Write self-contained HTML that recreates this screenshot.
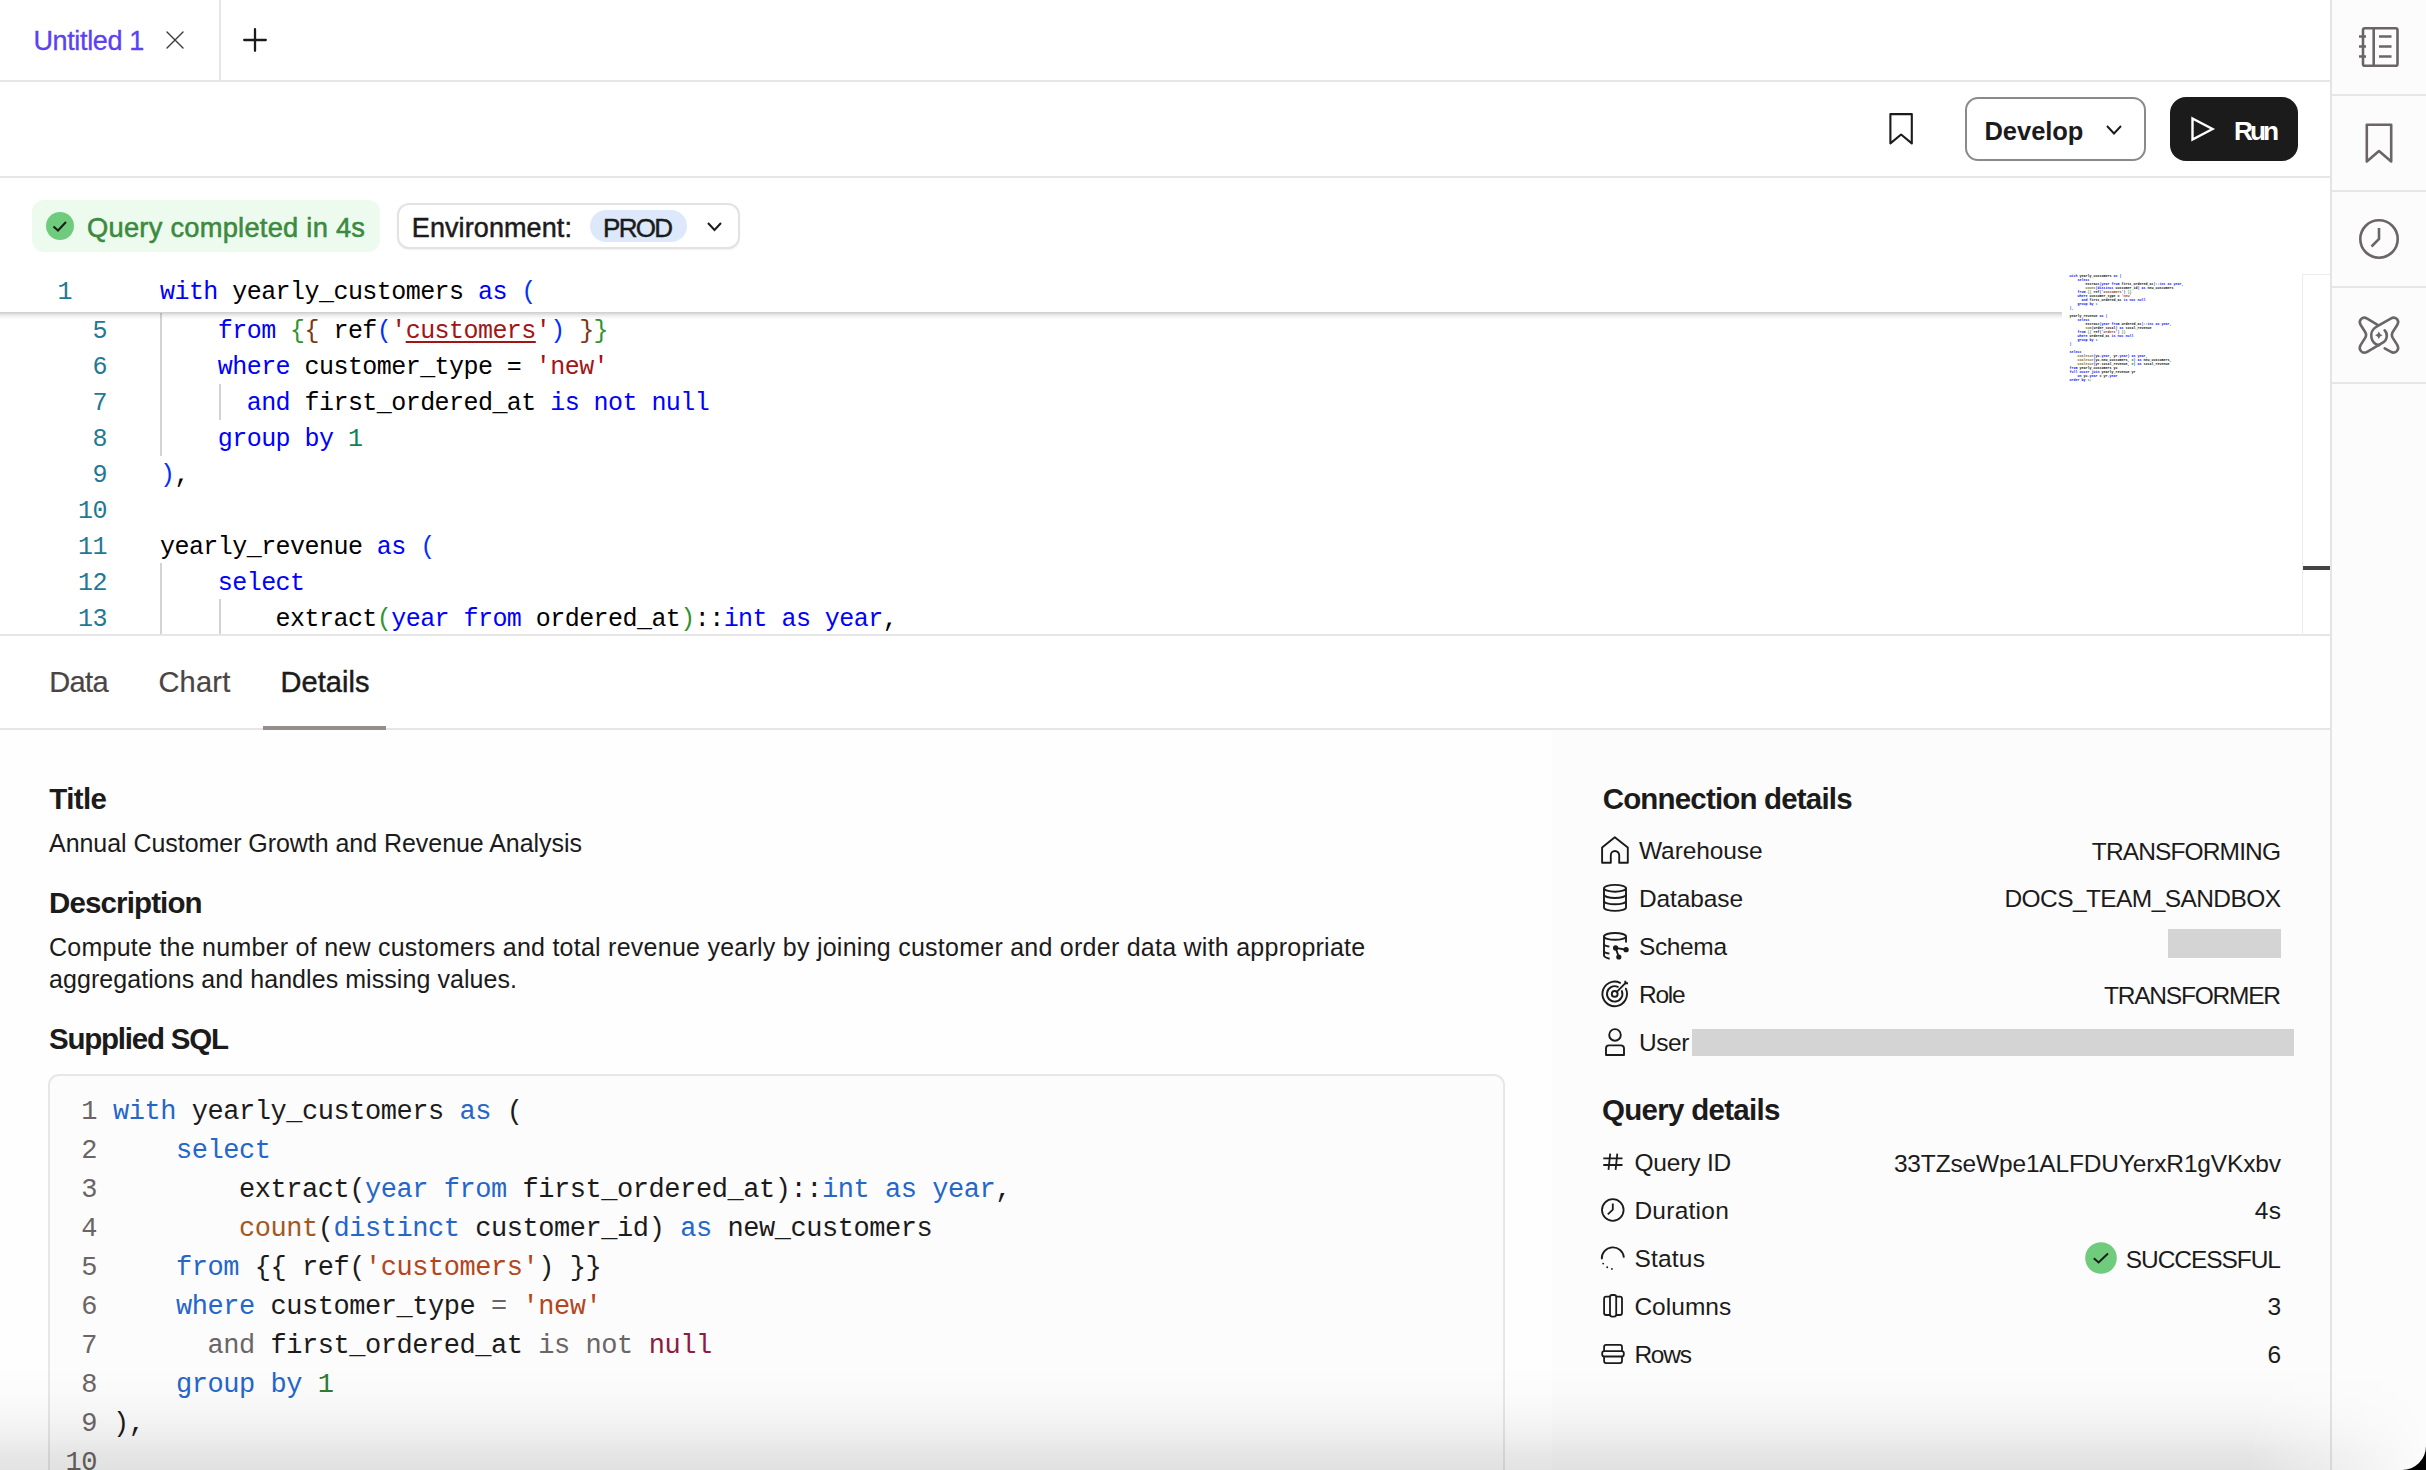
<!DOCTYPE html>
<html><head><meta charset="utf-8"><style>
html,body{margin:0;padding:0}
body{width:2426px;height:1470px;position:relative;overflow:hidden;background:#fff;font-family:'Liberation Sans', sans-serif}
.t{position:absolute;white-space:pre;font-family:'Liberation Sans', sans-serif}
.m{position:absolute;white-space:pre;font-family:'Liberation Mono', monospace}
svg{display:block}
</style></head><body>
<div style="position:absolute;left:0px;top:0px;width:2331px;height:80px;background:#fff"></div>
<div style="position:absolute;left:0px;top:80px;width:2331px;height:2px;background:#e7e5e5"></div>
<div style="position:absolute;left:219px;top:0px;width:2px;height:80px;background:#e7e5e5"></div>
<div class="t" style="left:33.40px;top:28.44px;font-size:27px;line-height:27px;color:#5b41f2;font-weight:400;letter-spacing:-0.347px;-webkit-text-stroke:0.3px #5b41f2;">Untitled 1</div>
<svg style="position:absolute;left:166px;top:31px;overflow:visible" width="18" height="18" viewBox="0 0 18 18"><path d="M1 1L17 17M17 1L1 17" stroke="#3d3a3a" stroke-width="1.4" fill="none" stroke-linecap="round"/></svg>
<svg style="position:absolute;left:243px;top:28px;overflow:visible" width="24" height="24" viewBox="0 0 24 24"><path d="M12 1.2V22.8M1.2 12H22.8" stroke="#1c1b1b" stroke-width="2.3" fill="none" stroke-linecap="round"/></svg>
<div style="position:absolute;left:0px;top:176px;width:2331px;height:2px;background:#e7e5e5"></div>
<svg style="position:absolute;left:1880px;top:105px;overflow:visible" width="45" height="50" viewBox="1880 105 45 50"><path d="M1890.4 114.1H1911.8V143.4L1901.1 134.5L1890.4 143.4Z" stroke="#1c1b1b" stroke-width="2.1" fill="none" stroke-linejoin="round"/></svg>
<div style="position:absolute;left:1965px;top:97px;width:181px;height:64px;box-sizing:border-box;border:2px solid #8e8988;border-radius:13px;background:#fff"></div>
<div class="t" style="left:1984.50px;top:118.71px;font-size:25.5px;line-height:25.5px;color:#1c1b1b;font-weight:700;letter-spacing:-0.042px;">Develop</div>
<svg style="position:absolute;left:2106px;top:125px;overflow:visible" width="16" height="10" viewBox="0 0 16 10"><path d="M1 1L8 8.5L15 1" stroke="#1c1b1b" stroke-width="1.9" fill="none"/></svg>
<div style="position:absolute;left:2170px;top:97px;width:128px;height:64px;background:#1c1b1b;border-radius:16px"></div>
<svg style="position:absolute;left:2191px;top:117px;overflow:visible" width="24" height="24" viewBox="0 0 24 24"><path d="M1.5 1.5L21.5 12L1.5 22.5Z" stroke="#fff" stroke-width="2.4" fill="none" stroke-linejoin="miter"/></svg>
<div class="t" style="left:2234.00px;top:118.04px;font-size:26.3px;line-height:26.3px;color:#fff;font-weight:700;letter-spacing:-3.062px;">Run</div>
<div style="position:absolute;left:32px;top:200px;width:348px;height:52px;background:#edfbee;border-radius:12px"></div>
<svg style="position:absolute;left:46px;top:212px;overflow:visible" width="28" height="28" viewBox="0 0 28 28"><circle cx="14" cy="14" r="14" fill="#6fcc7d"/><path d="M7.5 14.5L12 18.5L20 10" stroke="#1c1b1b" stroke-width="2" fill="none"/></svg>
<div class="t" style="left:87.00px;top:214.19px;font-size:27.3px;line-height:27.3px;color:#3b8a3f;font-weight:400;letter-spacing:0.244px;-webkit-text-stroke:0.55px #3b8a3f;">Query completed in 4s</div>
<div style="position:absolute;left:397px;top:203px;width:343px;height:46px;box-sizing:border-box;border:2px solid #e4e2e2;border-radius:12px;background:#fff;box-shadow:0 1px 2px rgba(0,0,0,0.06)"></div>
<div class="t" style="left:411.80px;top:214.64px;font-size:27px;line-height:27px;color:#1c1b1b;font-weight:400;letter-spacing:0.098px;-webkit-text-stroke:0.5px #1c1b1b;">Environment:</div>
<div style="position:absolute;left:590px;top:210px;width:97px;height:32px;background:#dde9fb;border-radius:16px"></div>
<div class="t" style="left:603.00px;top:215.29px;font-size:26px;line-height:26px;color:#1c1b1b;font-weight:400;letter-spacing:-1.708px;-webkit-text-stroke:0.45px #1c1b1b;">PROD</div>
<svg style="position:absolute;left:707px;top:222px;overflow:visible" width="15" height="10" viewBox="0 0 15 10"><path d="M1 1L7.5 8L14 1" stroke="#1c1b1b" stroke-width="2" fill="none"/></svg>
<div style="position:absolute;left:160px;top:313px;width:2px;height:143px;background:#d3d3d3"></div>
<div style="position:absolute;left:219px;top:384px;width:2px;height:36px;background:#d3d3d3"></div>
<div style="position:absolute;left:160px;top:563px;width:2px;height:72px;background:#d3d3d3"></div>
<div style="position:absolute;left:219px;top:599px;width:2px;height:36px;background:#d3d3d3"></div>
<div class="m" style="right:2319px;top:313.65px;font-size:25px;line-height:36px;letter-spacing:-0.550px;color:#237893;text-align:right">5</div>
<div class="m" style="left:160px;top:313.65px;font-size:25px;line-height:36px;letter-spacing:-0.550px"><span style="color:#0000ff">    from </span><span style="color:#319331">{</span><span style="color:#7b3814">{</span><span style="color:#000000"> ref</span><span style="color:#0431fa">(</span><span style="color:#a31515">&#x27;</span><span style="color:#a31515;text-decoration:underline;text-underline-offset:3px;text-decoration-thickness:2px">customers</span><span style="color:#a31515">&#x27;</span><span style="color:#0431fa">)</span><span style="color:#000000"> </span><span style="color:#7b3814">}</span><span style="color:#319331">}</span></div>
<div class="m" style="right:2319px;top:349.65px;font-size:25px;line-height:36px;letter-spacing:-0.550px;color:#237893;text-align:right">6</div>
<div class="m" style="left:160px;top:349.65px;font-size:25px;line-height:36px;letter-spacing:-0.550px"><span style="color:#0000ff">    where</span><span style="color:#000000"> customer_type = </span><span style="color:#a31515">&#x27;new&#x27;</span></div>
<div class="m" style="right:2319px;top:385.65px;font-size:25px;line-height:36px;letter-spacing:-0.550px;color:#237893;text-align:right">7</div>
<div class="m" style="left:160px;top:385.65px;font-size:25px;line-height:36px;letter-spacing:-0.550px"><span style="color:#0000ff">      and</span><span style="color:#000000"> first_ordered_at </span><span style="color:#0000ff">is not null</span></div>
<div class="m" style="right:2319px;top:421.65px;font-size:25px;line-height:36px;letter-spacing:-0.550px;color:#237893;text-align:right">8</div>
<div class="m" style="left:160px;top:421.65px;font-size:25px;line-height:36px;letter-spacing:-0.550px"><span style="color:#0000ff">    group by </span><span style="color:#098658">1</span></div>
<div class="m" style="right:2319px;top:457.65px;font-size:25px;line-height:36px;letter-spacing:-0.550px;color:#237893;text-align:right">9</div>
<div class="m" style="left:160px;top:457.65px;font-size:25px;line-height:36px;letter-spacing:-0.550px"><span style="color:#0431fa">)</span><span style="color:#000000">,</span></div>
<div class="m" style="right:2319px;top:493.65px;font-size:25px;line-height:36px;letter-spacing:-0.550px;color:#237893;text-align:right">10</div>
<div class="m" style="right:2319px;top:529.65px;font-size:25px;line-height:36px;letter-spacing:-0.550px;color:#237893;text-align:right">11</div>
<div class="m" style="left:160px;top:529.65px;font-size:25px;line-height:36px;letter-spacing:-0.550px"><span style="color:#000000">yearly_revenue </span><span style="color:#0000ff">as </span><span style="color:#0431fa">(</span></div>
<div class="m" style="right:2319px;top:565.65px;font-size:25px;line-height:36px;letter-spacing:-0.550px;color:#237893;text-align:right">12</div>
<div class="m" style="left:160px;top:565.65px;font-size:25px;line-height:36px;letter-spacing:-0.550px"><span style="color:#0000ff">    select</span></div>
<div class="m" style="right:2319px;top:601.65px;font-size:25px;line-height:36px;letter-spacing:-0.550px;color:#237893;text-align:right">13</div>
<div class="m" style="left:160px;top:601.65px;font-size:25px;line-height:36px;letter-spacing:-0.550px"><span style="color:#000000">        extract</span><span style="color:#319331">(</span><span style="color:#0000ff">year from </span><span style="color:#000000">ordered_at</span><span style="color:#319331">)</span><span style="color:#000000">::</span><span style="color:#0000ff">int as year</span><span style="color:#000000">,</span></div>
<div style="position:absolute;left:0px;top:274px;width:2062px;height:38px;background:#fff"></div>
<div style="position:absolute;left:0px;top:312px;width:2062px;height:7px;background:linear-gradient(to bottom, rgba(0,0,0,0.2), rgba(0,0,0,0.07) 50%, rgba(0,0,0,0))"></div>
<div class="m" style="right:2354px;top:275.35px;font-size:25px;line-height:36px;letter-spacing:-0.550px;color:#237893;text-align:right">1</div>
<div class="m" style="left:160px;top:275.35px;font-size:25px;line-height:36px;letter-spacing:-0.550px"><span style="color:#0000ff">with</span><span style="color:#000000"> yearly_customers </span><span style="color:#0000ff">as </span><span style="color:#0431fa">(</span></div>
<div class="m" style="left:2069.5px;top:274px;font-size:3.34px;line-height:4px;font-weight:700;"><div style="height:4px"><span style="color:#0000ff">with</span><span style="color:#000000"> </span><span style="color:#000000">yearly_customers</span><span style="color:#000000"> </span><span style="color:#0000ff">as</span><span style="color:#000000"> </span><span style="color:#0431fa">(</span></div><div style="height:4px"><span style="color:#000000">    </span><span style="color:#0000ff">select</span></div><div style="height:4px"><span style="color:#000000">        </span><span style="color:#000000">extract</span><span style="color:#0431fa">(</span><span style="color:#0000ff">year</span><span style="color:#000000"> </span><span style="color:#0000ff">from</span><span style="color:#000000"> </span><span style="color:#000000">first_ordered_at</span><span style="color:#0431fa">)</span><span style="color:#000000">::</span><span style="color:#0000ff">int</span><span style="color:#000000"> </span><span style="color:#0000ff">as</span><span style="color:#000000"> </span><span style="color:#0000ff">year</span><span style="color:#000000">,</span></div><div style="height:4px"><span style="color:#000000">        </span><span style="color:#795e26">count</span><span style="color:#0431fa">(</span><span style="color:#0000ff">distinct</span><span style="color:#000000"> </span><span style="color:#000000">customer_id</span><span style="color:#0431fa">)</span><span style="color:#000000"> </span><span style="color:#0000ff">as</span><span style="color:#000000"> </span><span style="color:#000000">new_customers</span></div><div style="height:4px"><span style="color:#000000">    </span><span style="color:#0000ff">from</span><span style="color:#000000"> </span><span style="color:#319331">{</span><span style="color:#319331">{</span><span style="color:#000000"> </span><span style="color:#000000">ref</span><span style="color:#0431fa">(</span><span style="color:#a31515">&#x27;customers&#x27;</span><span style="color:#0431fa">)</span><span style="color:#000000"> </span><span style="color:#319331">}</span><span style="color:#319331">}</span></div><div style="height:4px"><span style="color:#000000">    </span><span style="color:#0000ff">where</span><span style="color:#000000"> </span><span style="color:#000000">customer_type</span><span style="color:#000000"> = </span><span style="color:#a31515">&#x27;new&#x27;</span></div><div style="height:4px"><span style="color:#000000">      </span><span style="color:#0000ff">and</span><span style="color:#000000"> </span><span style="color:#000000">first_ordered_at</span><span style="color:#000000"> </span><span style="color:#0000ff">is</span><span style="color:#000000"> </span><span style="color:#0000ff">not</span><span style="color:#000000"> </span><span style="color:#0000ff">null</span></div><div style="height:4px"><span style="color:#000000">    </span><span style="color:#0000ff">group</span><span style="color:#000000"> </span><span style="color:#0000ff">by</span><span style="color:#000000"> </span><span style="color:#098658">1</span></div><div style="height:4px"><span style="color:#0431fa">)</span><span style="color:#000000">,</span></div><div style="height:4px">&nbsp;</div><div style="height:4px"><span style="color:#000000">yearly_revenue</span><span style="color:#000000"> </span><span style="color:#0000ff">as</span><span style="color:#000000"> </span><span style="color:#0431fa">(</span></div><div style="height:4px"><span style="color:#000000">    </span><span style="color:#0000ff">select</span></div><div style="height:4px"><span style="color:#000000">        </span><span style="color:#000000">extract</span><span style="color:#0431fa">(</span><span style="color:#0000ff">year</span><span style="color:#000000"> </span><span style="color:#0000ff">from</span><span style="color:#000000"> </span><span style="color:#000000">ordered_at</span><span style="color:#0431fa">)</span><span style="color:#000000">::</span><span style="color:#0000ff">int</span><span style="color:#000000"> </span><span style="color:#0000ff">as</span><span style="color:#000000"> </span><span style="color:#0000ff">year</span><span style="color:#000000">,</span></div><div style="height:4px"><span style="color:#000000">        </span><span style="color:#795e26">sum</span><span style="color:#0431fa">(</span><span style="color:#000000">order_total</span><span style="color:#0431fa">)</span><span style="color:#000000"> </span><span style="color:#0000ff">as</span><span style="color:#000000"> </span><span style="color:#000000">total_revenue</span></div><div style="height:4px"><span style="color:#000000">    </span><span style="color:#0000ff">from</span><span style="color:#000000"> </span><span style="color:#319331">{</span><span style="color:#319331">{</span><span style="color:#000000"> </span><span style="color:#000000">ref</span><span style="color:#0431fa">(</span><span style="color:#a31515">&#x27;orders&#x27;</span><span style="color:#0431fa">)</span><span style="color:#000000"> </span><span style="color:#319331">}</span><span style="color:#319331">}</span></div><div style="height:4px"><span style="color:#000000">    </span><span style="color:#0000ff">where</span><span style="color:#000000"> </span><span style="color:#000000">ordered_at</span><span style="color:#000000"> </span><span style="color:#0000ff">is</span><span style="color:#000000"> </span><span style="color:#0000ff">not</span><span style="color:#000000"> </span><span style="color:#0000ff">null</span></div><div style="height:4px"><span style="color:#000000">    </span><span style="color:#0000ff">group</span><span style="color:#000000"> </span><span style="color:#0000ff">by</span><span style="color:#000000"> </span><span style="color:#098658">1</span></div><div style="height:4px"><span style="color:#0431fa">)</span></div><div style="height:4px">&nbsp;</div><div style="height:4px"><span style="color:#0000ff">select</span></div><div style="height:4px"><span style="color:#000000">    </span><span style="color:#795e26">coalesce</span><span style="color:#0431fa">(</span><span style="color:#000000">yc</span><span style="color:#000000">.</span><span style="color:#0000ff">year</span><span style="color:#000000">, </span><span style="color:#000000">yr</span><span style="color:#000000">.</span><span style="color:#0000ff">year</span><span style="color:#0431fa">)</span><span style="color:#000000"> </span><span style="color:#0000ff">as</span><span style="color:#000000"> </span><span style="color:#0000ff">year</span><span style="color:#000000">,</span></div><div style="height:4px"><span style="color:#000000">    </span><span style="color:#795e26">coalesce</span><span style="color:#0431fa">(</span><span style="color:#000000">yc</span><span style="color:#000000">.</span><span style="color:#000000">new_customers</span><span style="color:#000000">, </span><span style="color:#098658">0</span><span style="color:#0431fa">)</span><span style="color:#000000"> </span><span style="color:#0000ff">as</span><span style="color:#000000"> </span><span style="color:#000000">new_customers</span><span style="color:#000000">,</span></div><div style="height:4px"><span style="color:#000000">    </span><span style="color:#795e26">coalesce</span><span style="color:#0431fa">(</span><span style="color:#000000">yr</span><span style="color:#000000">.</span><span style="color:#000000">total_revenue</span><span style="color:#000000">, </span><span style="color:#098658">0</span><span style="color:#0431fa">)</span><span style="color:#000000"> </span><span style="color:#0000ff">as</span><span style="color:#000000"> </span><span style="color:#000000">total_revenue</span></div><div style="height:4px"><span style="color:#0000ff">from</span><span style="color:#000000"> </span><span style="color:#000000">yearly_customers</span><span style="color:#000000"> </span><span style="color:#000000">yc</span></div><div style="height:4px"><span style="color:#0000ff">full</span><span style="color:#000000"> </span><span style="color:#0000ff">outer</span><span style="color:#000000"> </span><span style="color:#0000ff">join</span><span style="color:#000000"> </span><span style="color:#000000">yearly_revenue</span><span style="color:#000000"> </span><span style="color:#000000">yr</span></div><div style="height:4px"><span style="color:#000000">    </span><span style="color:#0000ff">on</span><span style="color:#000000"> </span><span style="color:#000000">yc</span><span style="color:#000000">.</span><span style="color:#0000ff">year</span><span style="color:#000000"> = </span><span style="color:#000000">yr</span><span style="color:#000000">.</span><span style="color:#0000ff">year</span></div><div style="height:4px"><span style="color:#0000ff">order</span><span style="color:#000000"> </span><span style="color:#0000ff">by</span><span style="color:#000000"> </span><span style="color:#098658">1</span><span style="color:#000000">;</span></div></div>
<div style="position:absolute;left:2302px;top:274px;width:1px;height:361px;background:#ececec"></div>
<div style="position:absolute;left:2302px;top:274px;width:29px;height:1px;background:#ececec"></div>
<div style="position:absolute;left:2303px;top:566px;width:28px;height:4px;background:#444"></div>
<div style="position:absolute;left:0px;top:634px;width:2331px;height:2px;background:#e7e5e5"></div>
<div class="t" style="left:49.30px;top:667.95px;font-size:29px;line-height:29px;color:#4a4544;font-weight:400;letter-spacing:-0.658px;-webkit-text-stroke:0.2px #4a4544;">Data</div>
<div class="t" style="left:158.40px;top:667.95px;font-size:29px;line-height:29px;color:#4a4544;font-weight:400;letter-spacing:0.256px;-webkit-text-stroke:0.2px #4a4544;">Chart</div>
<div class="t" style="left:280.50px;top:667.95px;font-size:29px;line-height:29px;color:#1c1b1b;font-weight:400;letter-spacing:0.079px;-webkit-text-stroke:0.45px #1c1b1b;">Details</div>
<div style="position:absolute;left:0px;top:728px;width:2331px;height:2px;background:#e7e5e5"></div>
<div style="position:absolute;left:263px;top:726px;width:123px;height:4px;background:#948e8c"></div>
<div style="position:absolute;left:0px;top:730px;width:1552px;height:740px;background:#fefefe"></div>
<div class="t" style="left:49.30px;top:783.73px;font-size:29.5px;line-height:29.5px;color:#1c1b1b;font-weight:700;letter-spacing:-0.606px;">Title</div>
<div class="t" style="left:49.00px;top:831.14px;font-size:25px;line-height:25px;color:#1c1b1b;font-weight:400;letter-spacing:-0.048px;">Annual Customer Growth and Revenue Analysis</div>
<div class="t" style="left:49.00px;top:887.73px;font-size:29.5px;line-height:29.5px;color:#1c1b1b;font-weight:700;letter-spacing:-0.865px;">Description</div>
<div class="t" style="left:49.00px;top:935.34px;font-size:25px;line-height:25px;color:#1c1b1b;font-weight:400;letter-spacing:0.252px;">Compute the number of new customers and total revenue yearly by joining customer and order data with appropriate</div>
<div class="t" style="left:49.00px;top:966.54px;font-size:25px;line-height:25px;color:#1c1b1b;font-weight:400;letter-spacing:0.061px;">aggregations and handles missing values.</div>
<div class="t" style="left:49.00px;top:1023.83px;font-size:29.5px;line-height:29.5px;color:#1c1b1b;font-weight:700;letter-spacing:-1.216px;">Supplied SQL</div>
<div style="position:absolute;left:48px;top:1074px;width:1457px;height:420px;box-sizing:border-box;border:2px solid #e8e6e6;border-radius:11px;background:#fcfcfc"></div>
<div class="m" style="right:2329px;top:1092.92px;font-size:27px;line-height:39px;letter-spacing:-0.450px;color:#6b6565;text-align:right">1</div>
<div class="m" style="left:113px;top:1092.92px;font-size:27px;line-height:39px;letter-spacing:-0.450px"><span style="color:#2566c9">with</span><span style="color:#1c1b1b"> yearly_customers </span><span style="color:#2566c9">as</span><span style="color:#1c1b1b"> (</span></div>
<div class="m" style="right:2329px;top:1131.92px;font-size:27px;line-height:39px;letter-spacing:-0.450px;color:#6b6565;text-align:right">2</div>
<div class="m" style="left:113px;top:1131.92px;font-size:27px;line-height:39px;letter-spacing:-0.450px"><span style="color:#2566c9">    select</span></div>
<div class="m" style="right:2329px;top:1170.92px;font-size:27px;line-height:39px;letter-spacing:-0.450px;color:#6b6565;text-align:right">3</div>
<div class="m" style="left:113px;top:1170.92px;font-size:27px;line-height:39px;letter-spacing:-0.450px"><span style="color:#1c1b1b">        extract(</span><span style="color:#2566c9">year</span><span style="color:#1c1b1b"> </span><span style="color:#2566c9">from</span><span style="color:#1c1b1b"> first_ordered_at)::</span><span style="color:#2566c9">int</span><span style="color:#1c1b1b"> </span><span style="color:#2566c9">as</span><span style="color:#1c1b1b"> </span><span style="color:#2566c9">year</span><span style="color:#1c1b1b">,</span></div>
<div class="m" style="right:2329px;top:1209.92px;font-size:27px;line-height:39px;letter-spacing:-0.450px;color:#6b6565;text-align:right">4</div>
<div class="m" style="left:113px;top:1209.92px;font-size:27px;line-height:39px;letter-spacing:-0.450px"><span style="color:#a3581f">        count</span><span style="color:#1c1b1b">(</span><span style="color:#2566c9">distinct</span><span style="color:#1c1b1b"> customer_id) </span><span style="color:#2566c9">as</span><span style="color:#1c1b1b"> new_customers</span></div>
<div class="m" style="right:2329px;top:1248.92px;font-size:27px;line-height:39px;letter-spacing:-0.450px;color:#6b6565;text-align:right">5</div>
<div class="m" style="left:113px;top:1248.92px;font-size:27px;line-height:39px;letter-spacing:-0.450px"><span style="color:#2566c9">    from</span><span style="color:#1c1b1b"> {{ ref(</span><span style="color:#b5451b">&#x27;customers&#x27;</span><span style="color:#1c1b1b">) }}</span></div>
<div class="m" style="right:2329px;top:1287.92px;font-size:27px;line-height:39px;letter-spacing:-0.450px;color:#6b6565;text-align:right">6</div>
<div class="m" style="left:113px;top:1287.92px;font-size:27px;line-height:39px;letter-spacing:-0.450px"><span style="color:#2566c9">    where</span><span style="color:#1c1b1b"> customer_type </span><span style="color:#6b6565">=</span><span style="color:#1c1b1b"> </span><span style="color:#b5451b">&#x27;new&#x27;</span></div>
<div class="m" style="right:2329px;top:1326.92px;font-size:27px;line-height:39px;letter-spacing:-0.450px;color:#6b6565;text-align:right">7</div>
<div class="m" style="left:113px;top:1326.92px;font-size:27px;line-height:39px;letter-spacing:-0.450px"><span style="color:#6b6565">      and</span><span style="color:#1c1b1b"> first_ordered_at </span><span style="color:#6b6565">is not</span><span style="color:#1c1b1b"> </span><span style="color:#8c1d40">null</span></div>
<div class="m" style="right:2329px;top:1365.92px;font-size:27px;line-height:39px;letter-spacing:-0.450px;color:#6b6565;text-align:right">8</div>
<div class="m" style="left:113px;top:1365.92px;font-size:27px;line-height:39px;letter-spacing:-0.450px"><span style="color:#2566c9">    group by</span><span style="color:#1c1b1b"> </span><span style="color:#2e7d32">1</span></div>
<div class="m" style="right:2329px;top:1404.92px;font-size:27px;line-height:39px;letter-spacing:-0.450px;color:#6b6565;text-align:right">9</div>
<div class="m" style="left:113px;top:1404.92px;font-size:27px;line-height:39px;letter-spacing:-0.450px"><span style="color:#1c1b1b">),</span></div>
<div class="m" style="right:2329px;top:1443.92px;font-size:27px;line-height:39px;letter-spacing:-0.450px;color:#6b6565;text-align:right">10</div>
<div style="position:absolute;left:1552px;top:730px;width:779px;height:740px;background:#fcfcfc"></div>
<div class="t" style="left:1602.70px;top:783.73px;font-size:29.5px;line-height:29.5px;color:#1c1b1b;font-weight:700;letter-spacing:-0.822px;">Connection details</div>
<div class="t" style="left:1639.00px;top:839.36px;font-size:24.5px;line-height:24.5px;color:#1c1b1b;font-weight:400;letter-spacing:-0.097px;">Warehouse</div>
<div class="t" style="left:2091.80px;top:839.76px;font-size:24.5px;line-height:24.5px;color:#1c1b1b;font-weight:400;letter-spacing:-0.868px;">TRANSFORMING</div>
<div class="t" style="left:1639.00px;top:887.26px;font-size:24.5px;line-height:24.5px;color:#1c1b1b;font-weight:400;letter-spacing:-0.125px;">Database</div>
<div class="t" style="left:2004.50px;top:887.36px;font-size:24.5px;line-height:24.5px;color:#1c1b1b;font-weight:400;letter-spacing:-0.586px;">DOCS_TEAM_SANDBOX</div>
<div class="t" style="left:1639.00px;top:935.26px;font-size:24.5px;line-height:24.5px;color:#1c1b1b;font-weight:400;letter-spacing:-0.375px;">Schema</div>
<div class="t" style="left:1639.00px;top:983.36px;font-size:24.5px;line-height:24.5px;color:#1c1b1b;font-weight:400;letter-spacing:-1.258px;">Role</div>
<div class="t" style="left:2104.00px;top:983.56px;font-size:24.5px;line-height:24.5px;color:#1c1b1b;font-weight:400;letter-spacing:-1.225px;">TRANSFORMER</div>
<div class="t" style="left:1639.00px;top:1030.96px;font-size:24.5px;line-height:24.5px;color:#1c1b1b;font-weight:400;letter-spacing:-0.417px;">User</div>
<svg style="position:absolute;left:1596px;top:830px;overflow:visible" width="38" height="40" viewBox="1596 830 38 40"><path d="M1602.1 862.8V847.6L1614.8 837.3L1627.8 847.6V862.8H1619.2V855.2A4.2 4.2 0 0 0 1610.8 855.2V862.8Z" stroke="#1c1b1b" stroke-width="1.9" fill="none" stroke-linejoin="round"/></svg>
<svg style="position:absolute;left:1596px;top:880px;overflow:visible" width="38" height="36" viewBox="1596 880 38 36"><g stroke="#1c1b1b" stroke-width="1.9" fill="none" stroke-linejoin="round"><ellipse cx="1615" cy="888.3" rx="11" ry="3.4"/><path d="M1604 888.3V907.5A11 3.4 0 0 0 1626 907.5V888.3"/><path d="M1604 894.6A11 3.4 0 0 0 1626 894.6"/><path d="M1604 900.9A11 3.4 0 0 0 1626 900.9"/></g></svg>
<svg style="position:absolute;left:1596px;top:926px;overflow:visible" width="38" height="38" viewBox="1596 926 38 38"><g stroke="#1c1b1b" stroke-width="1.9" fill="none" stroke-linejoin="round"><ellipse cx="1615" cy="936.4" rx="11" ry="3.4"/><path d="M1604 936.4V955.2C1604 956.8 1606.5 958 1609.7 958.7"/><path d="M1626 936.4V942.4"/><path d="M1604 944.2C1604 945.2 1606 946 1609.4 946.6"/><path d="M1604 951.2C1604 952.2 1606 953 1609.4 953.6"/><path d="M1615.6 947.9L1626.1 949.7M1615.6 947.9L1618.8 957"/></g><g fill="#1c1b1b"><circle cx="1615.6" cy="947.9" r="2.6"/><circle cx="1626.1" cy="949.7" r="2.6"/><circle cx="1618.8" cy="957" r="2.6"/></g></svg>
<svg style="position:absolute;left:1596px;top:976px;overflow:visible" width="38" height="36" viewBox="1596 976 38 36"><g stroke="#1c1b1b" stroke-width="1.9" fill="none" stroke-linejoin="round" stroke-linecap="round"><path d="M1625.85 988.70A12.3 12.3 0 1 1 1620.09 982.84"/><path d="M1621.84 991.02A7.7 7.7 0 1 1 1617.83 986.87"/><circle cx="1614.7" cy="993.9" r="2.9"/><path d="M1616.8 991.8L1625.4 983.2"/><path d="M1625.3 980.8V983.3H1628" stroke-linecap="butt"/></g></svg>
<svg style="position:absolute;left:1596px;top:1024px;overflow:visible" width="38" height="36" viewBox="1596 1024 38 36"><g stroke="#1c1b1b" stroke-width="1.9" fill="none" stroke-linejoin="round"><circle cx="1615" cy="1034.9" r="5.8"/><path d="M1606 1055V1048.4A3 3 0 0 1 1609 1045.4H1621A3 3 0 0 1 1624 1048.4V1055Z"/></g></svg>
<div style="position:absolute;left:2168px;top:929px;width:113px;height:29px;background:#d4d4d4"></div>
<div style="position:absolute;left:1692px;top:1029px;width:602px;height:27px;background:#d4d4d4"></div>
<div class="t" style="left:1602.00px;top:1094.53px;font-size:29.5px;line-height:29.5px;color:#1c1b1b;font-weight:700;letter-spacing:-0.706px;">Query details</div>
<div class="t" style="left:1634.40px;top:1151.26px;font-size:24.5px;line-height:24.5px;color:#1c1b1b;font-weight:400;letter-spacing:-0.171px;">Query ID</div>
<div class="t" style="left:1893.90px;top:1152.06px;font-size:24.5px;line-height:24.5px;color:#1c1b1b;font-weight:400;letter-spacing:-0.160px;">33TZseWpe1ALFDUYerxR1gVKxbv</div>
<div class="t" style="left:1634.40px;top:1199.46px;font-size:24.5px;line-height:24.5px;color:#1c1b1b;font-weight:400;letter-spacing:0.254px;">Duration</div>
<div class="t" style="left:2254.80px;top:1199.36px;font-size:24.5px;line-height:24.5px;color:#1c1b1b;font-weight:400;letter-spacing:0.325px;">4s</div>
<div class="t" style="left:1634.40px;top:1247.06px;font-size:24.5px;line-height:24.5px;color:#1c1b1b;font-weight:400;letter-spacing:0.220px;">Status</div>
<div class="t" style="left:2125.80px;top:1247.86px;font-size:24.5px;line-height:24.5px;color:#1c1b1b;font-weight:400;letter-spacing:-1.061px;">SUCCESSFUL</div>
<div class="t" style="left:1634.40px;top:1295.26px;font-size:24.5px;line-height:24.5px;color:#1c1b1b;font-weight:400;letter-spacing:0.029px;">Columns</div>
<div class="t" style="left:2267.38px;top:1295.46px;font-size:24.5px;line-height:24.5px;color:#1c1b1b;font-weight:400;letter-spacing:0.000px;">3</div>
<div class="t" style="left:1634.40px;top:1343.46px;font-size:24.5px;line-height:24.5px;color:#1c1b1b;font-weight:400;letter-spacing:-1.217px;">Rows</div>
<div class="t" style="left:2267.38px;top:1343.06px;font-size:24.5px;line-height:24.5px;color:#1c1b1b;font-weight:400;letter-spacing:0.000px;">6</div>
<svg style="position:absolute;left:1596px;top:1146px;overflow:visible" width="34" height="30" viewBox="1596 1146 34 30"><path d="M1610.2 1153.6L1608.5 1169.9M1617.3 1153.6L1615.6 1169.9M1603.3 1158.4H1622.5M1603.3 1165H1622.5" stroke="#1c1b1b" stroke-width="1.8" fill="none" stroke-linejoin="round"/></svg>
<svg style="position:absolute;left:1596px;top:1194px;overflow:visible" width="34" height="32" viewBox="1596 1194 34 32"><circle cx="1612.8" cy="1210" r="10.8" stroke="#1c1b1b" stroke-width="1.8" fill="none" stroke-linejoin="round"/><path d="M1612.8 1203.6V1209.6L1607.8 1214.4" stroke="#1c1b1b" stroke-width="1.8" fill="none" stroke-linejoin="round"/></svg>
<svg style="position:absolute;left:1596px;top:1242px;overflow:visible" width="34" height="32" viewBox="1596 1242 34 32"><path d="M1601.8 1259.2A11 11 0 1 1 1623.9 1257.6" stroke="#1c1b1b" stroke-width="1.8" fill="none" stroke-linejoin="round"/><g fill="#1c1b1b"><circle cx="1603.2" cy="1263.6" r="0.95"/><circle cx="1607.2" cy="1267.2" r="0.95"/><circle cx="1611.9" cy="1268.9" r="0.95"/></g></svg>
<svg style="position:absolute;left:1596px;top:1290px;overflow:visible" width="34" height="32" viewBox="1596 1290 34 32"><rect x="1604.1" y="1296.7" width="17.9" height="18.3" rx="2" stroke="#1c1b1b" stroke-width="1.8" fill="none" stroke-linejoin="round"/><rect x="1610" y="1295" width="6.2" height="21.6" rx="2" fill="#fcfcfc" stroke="#1c1b1b" stroke-width="1.8"/></svg>
<svg style="position:absolute;left:1596px;top:1338px;overflow:visible" width="34" height="32" viewBox="1596 1338 34 32"><rect x="1604.1" y="1344.9" width="17.9" height="18.2" rx="2" stroke="#1c1b1b" stroke-width="1.8" fill="none" stroke-linejoin="round"/><rect x="1602.2" y="1351.1" width="21.6" height="5.4" rx="2" fill="#fcfcfc" stroke="#1c1b1b" stroke-width="1.8"/></svg>
<svg style="position:absolute;left:2085px;top:1242px;overflow:visible" width="32" height="32" viewBox="0 0 32 32"><circle cx="16" cy="16" r="15.8" fill="#6fcc7d"/><path d="M8.8 16.2L13.6 20.4L23 11.6" stroke="#1c1b1b" stroke-width="2" fill="none"/></svg>
<div style="position:absolute;left:2331px;top:0px;width:95px;height:1470px;background:#fcfcfc"></div>
<div style="position:absolute;left:2330px;top:0px;width:2px;height:1470px;background:#e5e3e3"></div>
<div style="position:absolute;left:2332px;top:94px;width:94px;height:2px;background:#e7e5e5"></div>
<div style="position:absolute;left:2332px;top:190px;width:94px;height:2px;background:#e7e5e5"></div>
<div style="position:absolute;left:2332px;top:286px;width:94px;height:2px;background:#e7e5e5"></div>
<div style="position:absolute;left:2332px;top:382px;width:94px;height:2px;background:#e7e5e5"></div>
<svg style="position:absolute;left:2359px;top:27px;overflow:visible" width="40" height="40" viewBox="0 0 40 40"><rect x="4" y="1.3" width="34.5" height="37.5" rx="1.8" stroke="#6b6565" stroke-width="2.6" fill="none"/><path d="M14.7 1.3V38.8M20 9.5H32.5M20 19.5H32.5M20 29.5H32.5" stroke="#6b6565" stroke-width="2.6" fill="none"/><path d="M0 9.5H7M0 19.5H7M0 29.5H7" stroke="#6b6565" stroke-width="2.6" fill="none"/></svg>
<svg style="position:absolute;left:2365px;top:123px;overflow:visible" width="28" height="40" viewBox="0 0 28 40"><path d="M1.8 1.8H26.2V38.5L14 28L1.8 38.5Z" stroke="#6b6565" stroke-width="2.6" fill="none" stroke-linejoin="round"/></svg>
<svg style="position:absolute;left:2359px;top:219px;overflow:visible" width="40" height="40" viewBox="0 0 40 40"><circle cx="20" cy="20" r="18.7" stroke="#6b6565" stroke-width="2.6" fill="none"/><path d="M20 9V20L12.5 27.5" stroke="#6b6565" stroke-width="2.6" fill="none"/></svg>
<svg style="position:absolute;left:2359px;top:317px;overflow:visible" width="40" height="38" viewBox="0 0 40 38"><g stroke="#6b6565" stroke-width="2.6" fill="none" stroke-linejoin="round" stroke-linecap="round"><path d="M25.6 13.3C28.8 16.3 28.6 22.3 24.6 25.2L8.6 34.6C6.2 36 3.4 35.8 1.9 34C0.4 32.2 0.5 29.8 1.7 27.9L6.3 20.6C7.4 18.8 7.4 17 6.3 15.3L1.7 8C0.5 6.1 0.5 3.8 2 2.2C3.5 0.6 6.2 0.4 8.2 1.6L18.6 7.9"/><path d="M25.7 31.3L31.6 34.6C33.8 35.9 36.5 35.8 38 34C39.5 32.2 39.4 29.8 38.2 27.9L33.6 20.6C32.6 18.8 32.6 17 33.6 15.3L38.2 8C39.4 6.1 39.5 3.8 38 2.2C36.5 0.6 33.8 0.4 31.7 1.6L17.6 9.6C13.3 12.1 11.6 16.6 12.4 20.4C13.2 24.4 16.3 27.4 20.2 28.1"/></g><path d="M19.8 14.6L21.2 17L23.5 18.3L21.2 19.6L19.8 22L18.4 19.6L16.1 18.3L18.4 17Z" fill="#6b6565"/></svg>
<div style="position:absolute;left:0px;top:1366px;width:2426px;height:104px;background:linear-gradient(to bottom, rgba(0,0,0,0) 0px, rgba(0,0,0,0.012) 30px, rgba(0,0,0,0.03) 52px, rgba(0,0,0,0.058) 72px, rgba(0,0,0,0.09) 88px, rgba(0,0,0,0.105) 104px);-webkit-mask-image:linear-gradient(to right, #000 0px, #000 2250px, transparent 2426px);mask-image:linear-gradient(to right, #000 0px, #000 2250px, transparent 2426px)"></div>
<svg style="position:absolute;left:2402px;top:1446px;overflow:visible" width="24" height="24" viewBox="0 0 24 24"><path d="M24 0V24H0A24 24 0 0 0 24 0Z" fill="#000"/></svg>
</body></html>
